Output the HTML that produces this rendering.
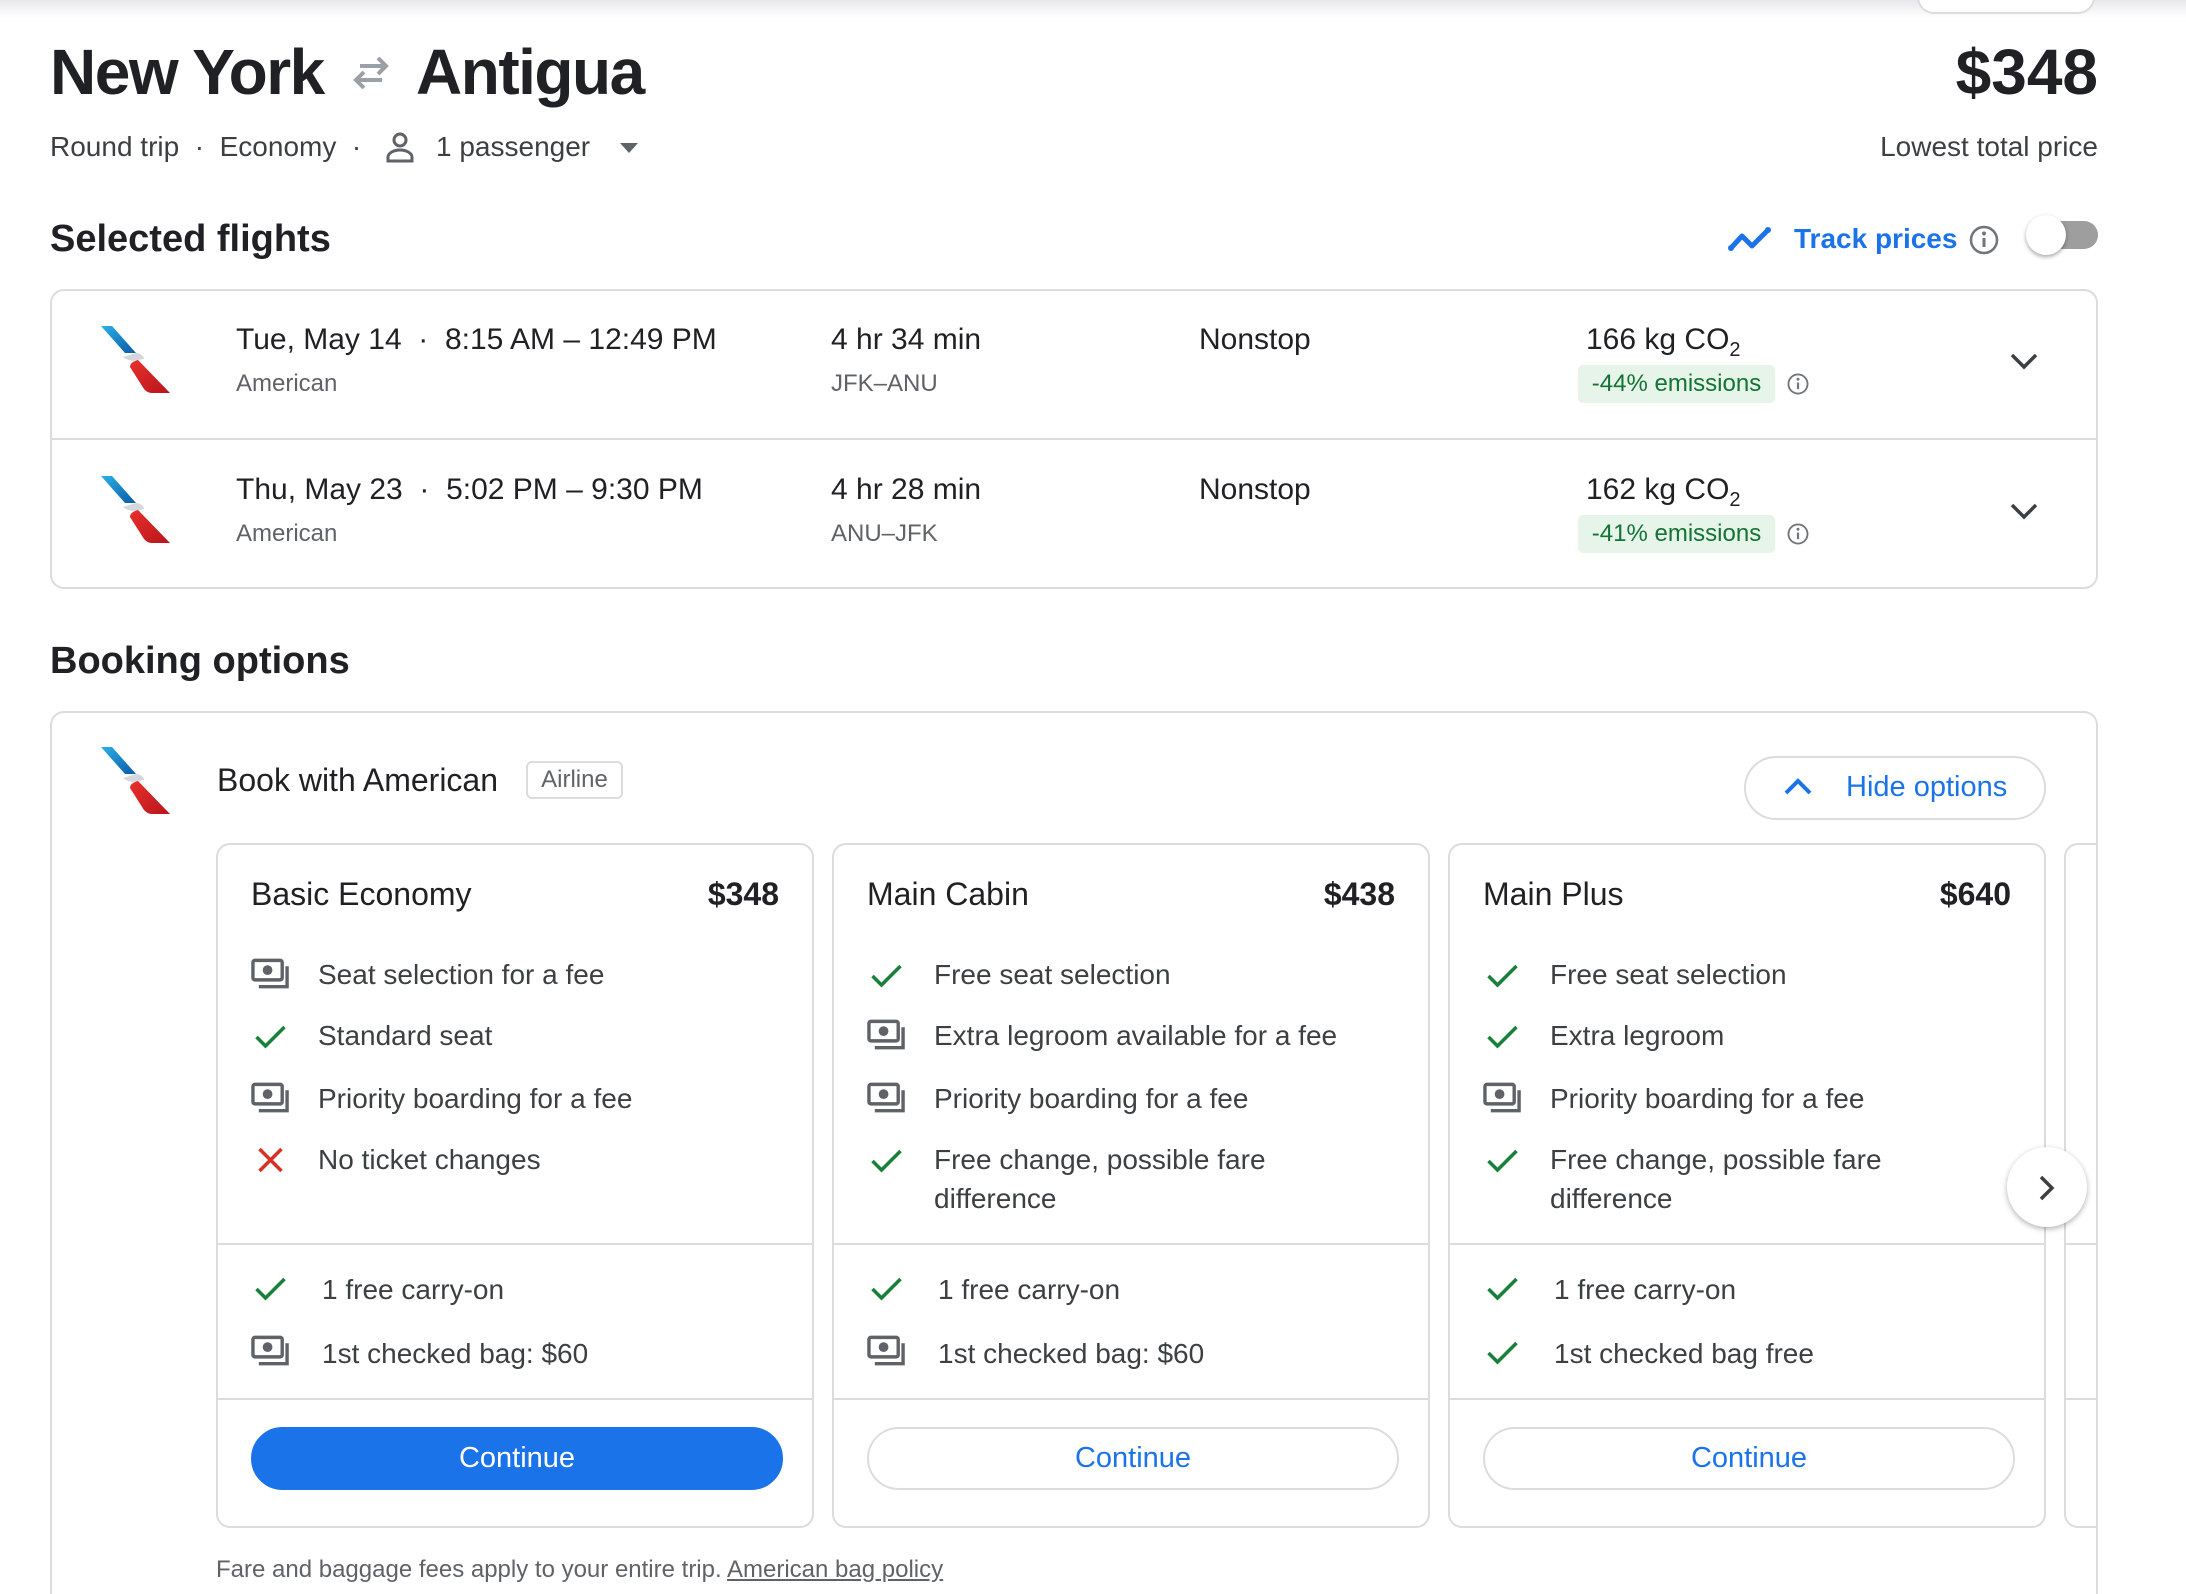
<!DOCTYPE html>
<html><head><meta charset="utf-8"><style>
*{margin:0;padding:0;box-sizing:border-box}
html,body{width:2186px;height:1594px;overflow:hidden}
body{background:#fff;font-family:"Liberation Sans",Arial,sans-serif;color:#202124;position:relative}
.a{position:absolute;white-space:nowrap;line-height:1}
.g{color:#5f6368}
.card{position:absolute;border:2px solid #dadce0;border-radius:14px;background:#fff}
.fare{position:absolute;top:843px;width:598px;height:685px;border:2px solid #dadce0;border-radius:14px;overflow:hidden;background:#fff}
.row{position:absolute;left:0;width:100%;font-size:28px;color:#3c4043}
.row svg{position:absolute;left:33px}
.row span{position:absolute;left:100px;line-height:39px}
.hr{position:absolute;left:0;width:100%;height:2px;background:#dadce0}
.btn{position:absolute;left:33px;top:582px;width:532px;height:63px;border-radius:32px;border:2px solid #dadce0;color:#1a73e8;font-size:29px;text-align:center;line-height:59px}
</style></head><body>
<div style="position:absolute;left:0;top:0;width:2186px;height:18px;background:linear-gradient(#e8e8ea,#fff)"></div>
<div style="position:absolute;left:1917px;top:-20px;width:178px;height:34px;border:2px solid #dadce0;border-radius:18px;background:#fff"></div>

<div class="a" style="left:50px;top:40px;font-size:64px;font-weight:bold;letter-spacing:-1.5px">New York</div>
<svg class="a" style="left:350px;top:56px" width="42" height="34" viewBox="0 0 42 34"><g stroke="#9aa0a6" stroke-width="4" fill="none"><path d="M6 24h26M14 16l-8 8 8 8"/><path d="M10 10h26M28 2l8 8-8 8"/></g></svg>
<div class="a" style="left:416px;top:40px;font-size:64px;font-weight:bold;letter-spacing:-1.5px">Antigua</div>
<div class="a" style="right:88px;top:40px;font-size:64px;font-weight:bold">$348</div>

<div class="a" style="left:50px;top:133px;font-size:28px;color:#3c4043">Round trip &nbsp;·&nbsp; Economy &nbsp;·&nbsp;</div>
<svg class="a" style="left:385px;top:131px" width="30" height="32" viewBox="0 0 30 32"><circle cx="15" cy="9" r="6" stroke="#5f6368" stroke-width="3" fill="none"/><path d="M3 30v-4c0-4 6-7 12-7s12 3 12 7v4z" stroke="#5f6368" stroke-width="3" fill="none"/></svg>
<div class="a" style="left:436px;top:133px;font-size:28px;color:#3c4043">1 passenger</div>
<svg class="a" style="left:620px;top:143px" width="18" height="10"><path d="M0 0h18L9 10z" fill="#5f6368"/></svg>
<div class="a" style="right:88px;top:133px;font-size:28px;color:#3c4043">Lowest total price</div>

<div class="a" style="left:50px;top:220px;font-size:38px;font-weight:bold">Selected flights</div>
<svg class="a" style="left:1728px;top:226px" width="44" height="26" viewBox="0 0 44 26"><path d="M3 22L14 10l10 10L40 4" stroke="#1a73e8" stroke-width="5" fill="none" stroke-linejoin="round"/><circle cx="3" cy="22" r="3" fill="#1a73e8"/><circle cx="40" cy="4" r="3" fill="#1a73e8"/></svg>
<div class="a" style="left:1794px;top:225px;font-size:28px;color:#1a73e8;font-weight:bold">Track prices</div>
<svg class="a" style="left:1969px;top:225px" width="30" height="30" viewBox="0 0 30 30"><circle cx="15" cy="15" r="13" stroke="#70757a" stroke-width="2.5" fill="none"/><path d="M15 13v9" stroke="#70757a" stroke-width="3"/><circle cx="15" cy="8.5" r="2" fill="#70757a"/></svg>
<div style="position:absolute;left:2036px;top:221px;width:62px;height:28px;border-radius:14px;background:#9e9e9e"></div>
<div style="position:absolute;left:2026px;top:215px;width:40px;height:40px;border-radius:50%;background:#fff;box-shadow:0 2px 4px rgba(0,0,0,.35)"></div>

<svg width="0" height="0" style="position:absolute"><defs>
<linearGradient id="bl" x1="0" y1="0" x2="1" y2="1"><stop offset="0" stop-color="#2bb0e6"/><stop offset="1" stop-color="#0b5aa8"/></linearGradient>
<linearGradient id="rd" x1="0" y1="0" x2="1" y2="1"><stop offset="0" stop-color="#e8302c"/><stop offset="1" stop-color="#b8151c"/></linearGradient>
<symbol id="aa" viewBox="0 0 70 70"><path d="M1 1h11l24 27H25z" fill="url(#bl)"/><path d="M23 32l13-4c4 0 8 3 8 6l-12 2c-3-1-7-2-9-4z" fill="#d3d8de"/><path d="M30 42c0-4 4-6 8-7l32 33H52c-4 0-6-2-8-4z" fill="url(#rd)"/></symbol>
<symbol id="mo" viewBox="0 0 40 36"><rect x="2" y="3" width="30" height="20" rx="2" stroke="#5f6368" stroke-width="3.5" fill="none"/><circle cx="17" cy="13" r="5" fill="#5f6368"/><path d="M37 9v21H8" stroke="#5f6368" stroke-width="3.5" fill="none"/></symbol>
<symbol id="ck" viewBox="0 0 36 36"><path d="M4 19l9 9L32 9" stroke="#188038" stroke-width="3.5" fill="none"/></symbol>
<symbol id="x" viewBox="0 0 36 36"><path d="M7 7l22 22M29 7L7 29" stroke="#d93025" stroke-width="3.5"/></symbol>
</defs></svg>

<div class="card" style="left:50px;top:289px;width:2048px;height:300px"></div>
<div style="position:absolute;left:52px;top:438px;width:2044px;height:2px;background:#dadce0"></div>
<svg class="a" style="left:100px;top:325px" width="70" height="70"><use href="#aa"/></svg>
<svg class="a" style="left:100px;top:475px" width="70" height="70"><use href="#aa"/></svg>
<div class="a" style="left:236px;top:325px;font-size:30px">Tue, May 14 &nbsp;·&nbsp; 8:15 AM – 12:49 PM</div>
<div class="a g" style="left:236px;top:372px;font-size:24px">American</div>
<div class="a" style="left:831px;top:325px;font-size:30px">4 hr 34 min</div>
<div class="a g" style="left:831px;top:372px;font-size:24px">JFK–ANU</div>
<div class="a" style="left:1199px;top:325px;font-size:30px">Nonstop</div>
<div class="a" style="left:1586px;top:325px;font-size:30px">166 kg CO<sub style="font-size:20px">2</sub></div>
<div class="a" style="left:1578px;top:365px;width:197px;height:38px;background:#e6f4ea;border-radius:5px;color:#137333;font-size:24px;line-height:38px;text-align:center">-44% emissions</div>
<svg class="a" style="left:1787px;top:373px" width="22" height="22" viewBox="0 0 30 30"><circle cx="15" cy="15" r="13" stroke="#70757a" stroke-width="2.5" fill="none"/><path d="M15 13v9" stroke="#70757a" stroke-width="3"/><circle cx="15" cy="8.5" r="2" fill="#70757a"/></svg>
<svg class="a" style="left:2010px;top:352px" width="28" height="18"><path d="M2 3l12 12L26 3" stroke="#3c4043" stroke-width="3.5" fill="none"/></svg>

<div class="a" style="left:236px;top:475px;font-size:30px">Thu, May 23 &nbsp;·&nbsp; 5:02 PM – 9:30 PM</div>
<div class="a g" style="left:236px;top:522px;font-size:24px">American</div>
<div class="a" style="left:831px;top:475px;font-size:30px">4 hr 28 min</div>
<div class="a g" style="left:831px;top:522px;font-size:24px">ANU–JFK</div>
<div class="a" style="left:1199px;top:475px;font-size:30px">Nonstop</div>
<div class="a" style="left:1586px;top:475px;font-size:30px">162 kg CO<sub style="font-size:20px">2</sub></div>
<div class="a" style="left:1578px;top:515px;width:197px;height:38px;background:#e6f4ea;border-radius:5px;color:#137333;font-size:24px;line-height:38px;text-align:center">-41% emissions</div>
<svg class="a" style="left:1787px;top:523px" width="22" height="22" viewBox="0 0 30 30"><circle cx="15" cy="15" r="13" stroke="#70757a" stroke-width="2.5" fill="none"/><path d="M15 13v9" stroke="#70757a" stroke-width="3"/><circle cx="15" cy="8.5" r="2" fill="#70757a"/></svg>
<svg class="a" style="left:2010px;top:502px" width="28" height="18"><path d="M2 3l12 12L26 3" stroke="#3c4043" stroke-width="3.5" fill="none"/></svg>

<div class="a" style="left:50px;top:642px;font-size:38px;font-weight:bold">Booking options</div>

<div class="card" style="left:50px;top:711px;width:2048px;height:883px;overflow:hidden;border-bottom:none;border-radius:14px 14px 0 0">
<svg class="a" style="left:48px;top:33px" width="70" height="70"><use href="#aa"/></svg>
<div class="a" style="left:165px;top:51px;font-size:32px">Book with American</div>
<div class="a" style="left:474px;top:48px;width:97px;height:38px;border:2px solid #dadce0;border-radius:6px;font-size:24px;color:#5f6368;line-height:34px;text-align:center">Airline</div>
<div class="a" style="left:1692px;top:43px;width:302px;height:64px;border:2px solid #dadce0;border-radius:32px"></div>
<svg class="a" style="left:1731px;top:65px" width="30" height="18"><path d="M3 15L15 3l12 12" stroke="#1a73e8" stroke-width="4" fill="none"/></svg>
<div class="a" style="left:1794px;top:60px;font-size:29px;color:#1a73e8">Hide options</div>

<div class="fare" style="left:164px;top:130px">
<div class="a" style="left:33px;top:33px;font-size:32px">Basic Economy</div>
<div class="a" style="right:33px;top:33px;font-size:32px;font-weight:bold">$348</div>
<div class="row" style="top:110px"><svg width="39" height="36" style="top:2px"><use href="#mo"/></svg><span>Seat selection for a fee</span></div>
<div class="row" style="top:171px"><svg width="39" height="36" style="top:2px"><use href="#ck"/></svg><span>Standard seat</span></div>
<div class="row" style="top:234px"><svg width="39" height="36" style="top:2px"><use href="#mo"/></svg><span>Priority boarding for a fee</span></div>
<div class="row" style="top:295px"><svg width="39" height="36" style="top:2px"><use href="#x"/></svg><span>No ticket changes</span></div>
<div class="hr" style="top:398px"></div>
<div class="row" style="top:425px"><svg width="39" height="36" style="top:0"><use href="#ck"/></svg><span style="left:104px">1 free carry-on</span></div>
<div class="row" style="top:489px"><svg width="39" height="36" style="top:0"><use href="#mo"/></svg><span style="left:104px">1st checked bag: $60</span></div>
<div class="hr" style="top:553px"></div>
<div class="btn" style="background:#1a73e8;border-color:#1a73e8;color:#fff">Continue</div>
</div>

<div class="fare" style="left:780px;top:130px">
<div class="a" style="left:33px;top:33px;font-size:32px">Main Cabin</div>
<div class="a" style="right:33px;top:33px;font-size:32px;font-weight:bold">$438</div>
<div class="row" style="top:110px"><svg width="39" height="36" style="top:2px"><use href="#ck"/></svg><span>Free seat selection</span></div>
<div class="row" style="top:171px"><svg width="39" height="36" style="top:2px"><use href="#mo"/></svg><span>Extra legroom available for a fee</span></div>
<div class="row" style="top:234px"><svg width="39" height="36" style="top:2px"><use href="#mo"/></svg><span>Priority boarding for a fee</span></div>
<div class="row" style="top:295px"><svg width="39" height="36" style="top:2px"><use href="#ck"/></svg><span style="white-space:normal;width:420px">Free change, possible fare difference</span></div>
<div class="hr" style="top:398px"></div>
<div class="row" style="top:425px"><svg width="39" height="36" style="top:0"><use href="#ck"/></svg><span style="left:104px">1 free carry-on</span></div>
<div class="row" style="top:489px"><svg width="39" height="36" style="top:0"><use href="#mo"/></svg><span style="left:104px">1st checked bag: $60</span></div>
<div class="hr" style="top:553px"></div>
<div class="btn">Continue</div>
</div>

<div class="fare" style="left:1396px;top:130px">
<div class="a" style="left:33px;top:33px;font-size:32px">Main Plus</div>
<div class="a" style="right:33px;top:33px;font-size:32px;font-weight:bold">$640</div>
<div class="row" style="top:110px"><svg width="39" height="36" style="top:2px"><use href="#ck"/></svg><span>Free seat selection</span></div>
<div class="row" style="top:171px"><svg width="39" height="36" style="top:2px"><use href="#ck"/></svg><span>Extra legroom</span></div>
<div class="row" style="top:234px"><svg width="39" height="36" style="top:2px"><use href="#mo"/></svg><span>Priority boarding for a fee</span></div>
<div class="row" style="top:295px"><svg width="39" height="36" style="top:2px"><use href="#ck"/></svg><span style="white-space:normal;width:420px">Free change, possible fare difference</span></div>
<div class="hr" style="top:398px"></div>
<div class="row" style="top:425px"><svg width="39" height="36" style="top:0"><use href="#ck"/></svg><span style="left:104px">1 free carry-on</span></div>
<div class="row" style="top:489px"><svg width="39" height="36" style="top:0"><use href="#ck"/></svg><span style="left:104px">1st checked bag free</span></div>
<div class="hr" style="top:553px"></div>
<div class="btn">Continue</div>
</div>

<div class="fare" style="left:2012px;top:130px">
<div class="hr" style="top:398px"></div><div class="hr" style="top:553px"></div>
</div>

<div class="a" style="left:1955px;top:434px;width:80px;height:80px;border-radius:50%;background:#fff;box-shadow:0 2px 6px rgba(0,0,0,.3)"></div>
<svg class="a" style="left:1985px;top:461px" width="20" height="28"><path d="M4 3l11 11L4 25" stroke="#3c4043" stroke-width="3.5" fill="none"/></svg>

<div class="a" style="left:164px;top:845px;font-size:24px;color:#5f6368">Fare and baggage fees apply to your entire trip. <u>American bag policy</u></div>
</div>
</body></html>
